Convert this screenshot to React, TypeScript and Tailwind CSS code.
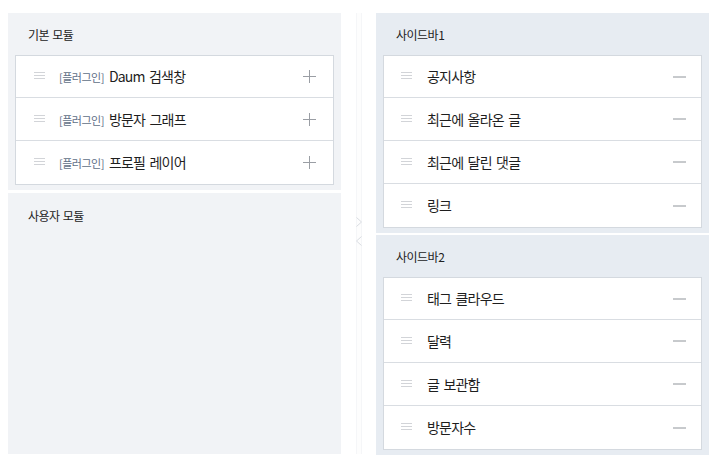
import { useState } from 'react';

type Item = { id: string; label: string; plugin?: boolean };

const basicModules: Item[] = [
  { id: 'daum', label: 'Daum 검색창', plugin: true },
  { id: 'graph', label: '방문자 그래프', plugin: true },
  { id: 'profile', label: '프로필 레이어', plugin: true },
];

const sidebar1: Item[] = [
  { id: 'notice', label: '공지사항' },
  { id: 'recent-post', label: '최근에 올라온 글' },
  { id: 'recent-comment', label: '최근에 달린 댓글' },
  { id: 'link', label: '링크' },
];

const sidebar2: Item[] = [
  { id: 'tag', label: '태그 클라우드' },
  { id: 'calendar', label: '달력' },
  { id: 'archive', label: '글 보관함' },
  { id: 'counter', label: '방문자수' },
];

function DragHandle() {
  return (
    <svg width="11" height="9" viewBox="0 0 11 9" className="shrink-0">
      <path d="M0 0.5H11M0 3.5H11M0 6.5H11" stroke="#d2d4d8" strokeWidth="1" />
    </svg>
  );
}

function PlusIcon() {
  return (
    <svg width="13" height="13" viewBox="0 0 13 13">
      <path d="M6.5 0V13M0 6.5H13" stroke="#9a9ea4" strokeWidth="1" />
    </svg>
  );
}

function MinusIcon() {
  return (
    <svg width="13" height="2" viewBox="0 0 13 2">
      <path d="M0 1H13" stroke="#8f949a" strokeWidth="1" />
    </svg>
  );
}

function Chevron({ dir }: { dir: 'left' | 'right' }) {
  return (
    <svg width="6" height="10" viewBox="0 0 6 10">
      <path d={dir === 'right' ? 'M0.5 0.5L5.5 5L0.5 9.5' : 'M5.5 0.5L0.5 5L5.5 9.5'} fill="none" stroke="#d9dce1" strokeWidth="1" />
    </svg>
  );
}

function ModuleRow({ item, action }: { item: Item; action: 'add' | 'remove' }) {
  return (
    <li className="flex h-[43px] items-center bg-white first:h-[42px]">
      <div className={action === 'add' ? 'ml-[18px]' : 'ml-[17px]'}>
        <DragHandle />
      </div>
      <div className={`flex items-baseline ${action === 'add' ? 'ml-[14px]' : 'ml-[15px]'}`}>
        {item.plugin ? <span className="mr-[5px] text-[11px] tracking-[-0.5px] text-[#5f6f87]">[플러그인]</span> : null}
        <span className="text-[14px] tracking-[-0.8px] text-[#1e1e1e] [word-spacing:2px]">{item.label}</span>
      </div>
      <button className={`ml-auto flex h-[20px] w-[20px] items-center justify-center ${action === 'add' ? 'mr-[14px]' : 'mr-[12px]'}`}>
        {action === 'add' ? <PlusIcon /> : <MinusIcon />}
      </button>
    </li>
  );
}

function Panel({ title, items, action, tone }: { title: string; items: Item[]; action: 'add' | 'remove'; tone: 'gray' | 'blue' }) {
  return (
    <section className={`px-[7px] pb-[5px] ${tone === 'gray' ? 'bg-[#f1f3f6]' : 'bg-[#e7ecf2]'}`}>
      <h2 className="flex h-[42px] items-center pl-[13px] pt-[2px] text-[12px] tracking-[-0.5px] text-[#222] [word-spacing:1px]">{title}</h2>
      <ul className="divide-y divide-[#d9dde2] border border-[#d4d9df]">
        {items.map((item) => (
          <ModuleRow key={item.id} item={item} action={action} />
        ))}
      </ul>
    </section>
  );
}

export default function App() {
  const [left] = useState(basicModules);

  return (
    <div className="h-[465px] w-[720px] bg-white pt-[13px] font-['Noto_Sans_CJK_KR','Noto_Sans',sans-serif]">
      <div className="flex h-[441px] px-[8px]">
        <div className="flex w-[333px] flex-col gap-[3px]">
          <Panel title="기본 모듈" items={left} action="add" tone="gray" />
          <section className="flex-1 bg-[#f1f3f6]">
            <h2 className="flex h-[44px] items-center pl-[20px] pt-[2px] text-[12px] tracking-[-0.5px] text-[#222] [word-spacing:1px]">사용자 모듈</h2>
          </section>
        </div>

        <div className="flex w-[35px] justify-center">
          <div className="flex w-[6px] flex-col items-center justify-center gap-[9px] border-x border-[#f5f6f8] bg-[#fdfdfd] pb-[4px]">
            <Chevron dir="right" />
            <Chevron dir="left" />
          </div>
        </div>

        <div className="flex w-[333px] flex-col gap-[2px]">
          <Panel title="사이드바1" items={sidebar1} action="remove" tone="blue" />
          <Panel title="사이드바2" items={sidebar2} action="remove" tone="blue" />
        </div>
      </div>
    </div>
  );
}
